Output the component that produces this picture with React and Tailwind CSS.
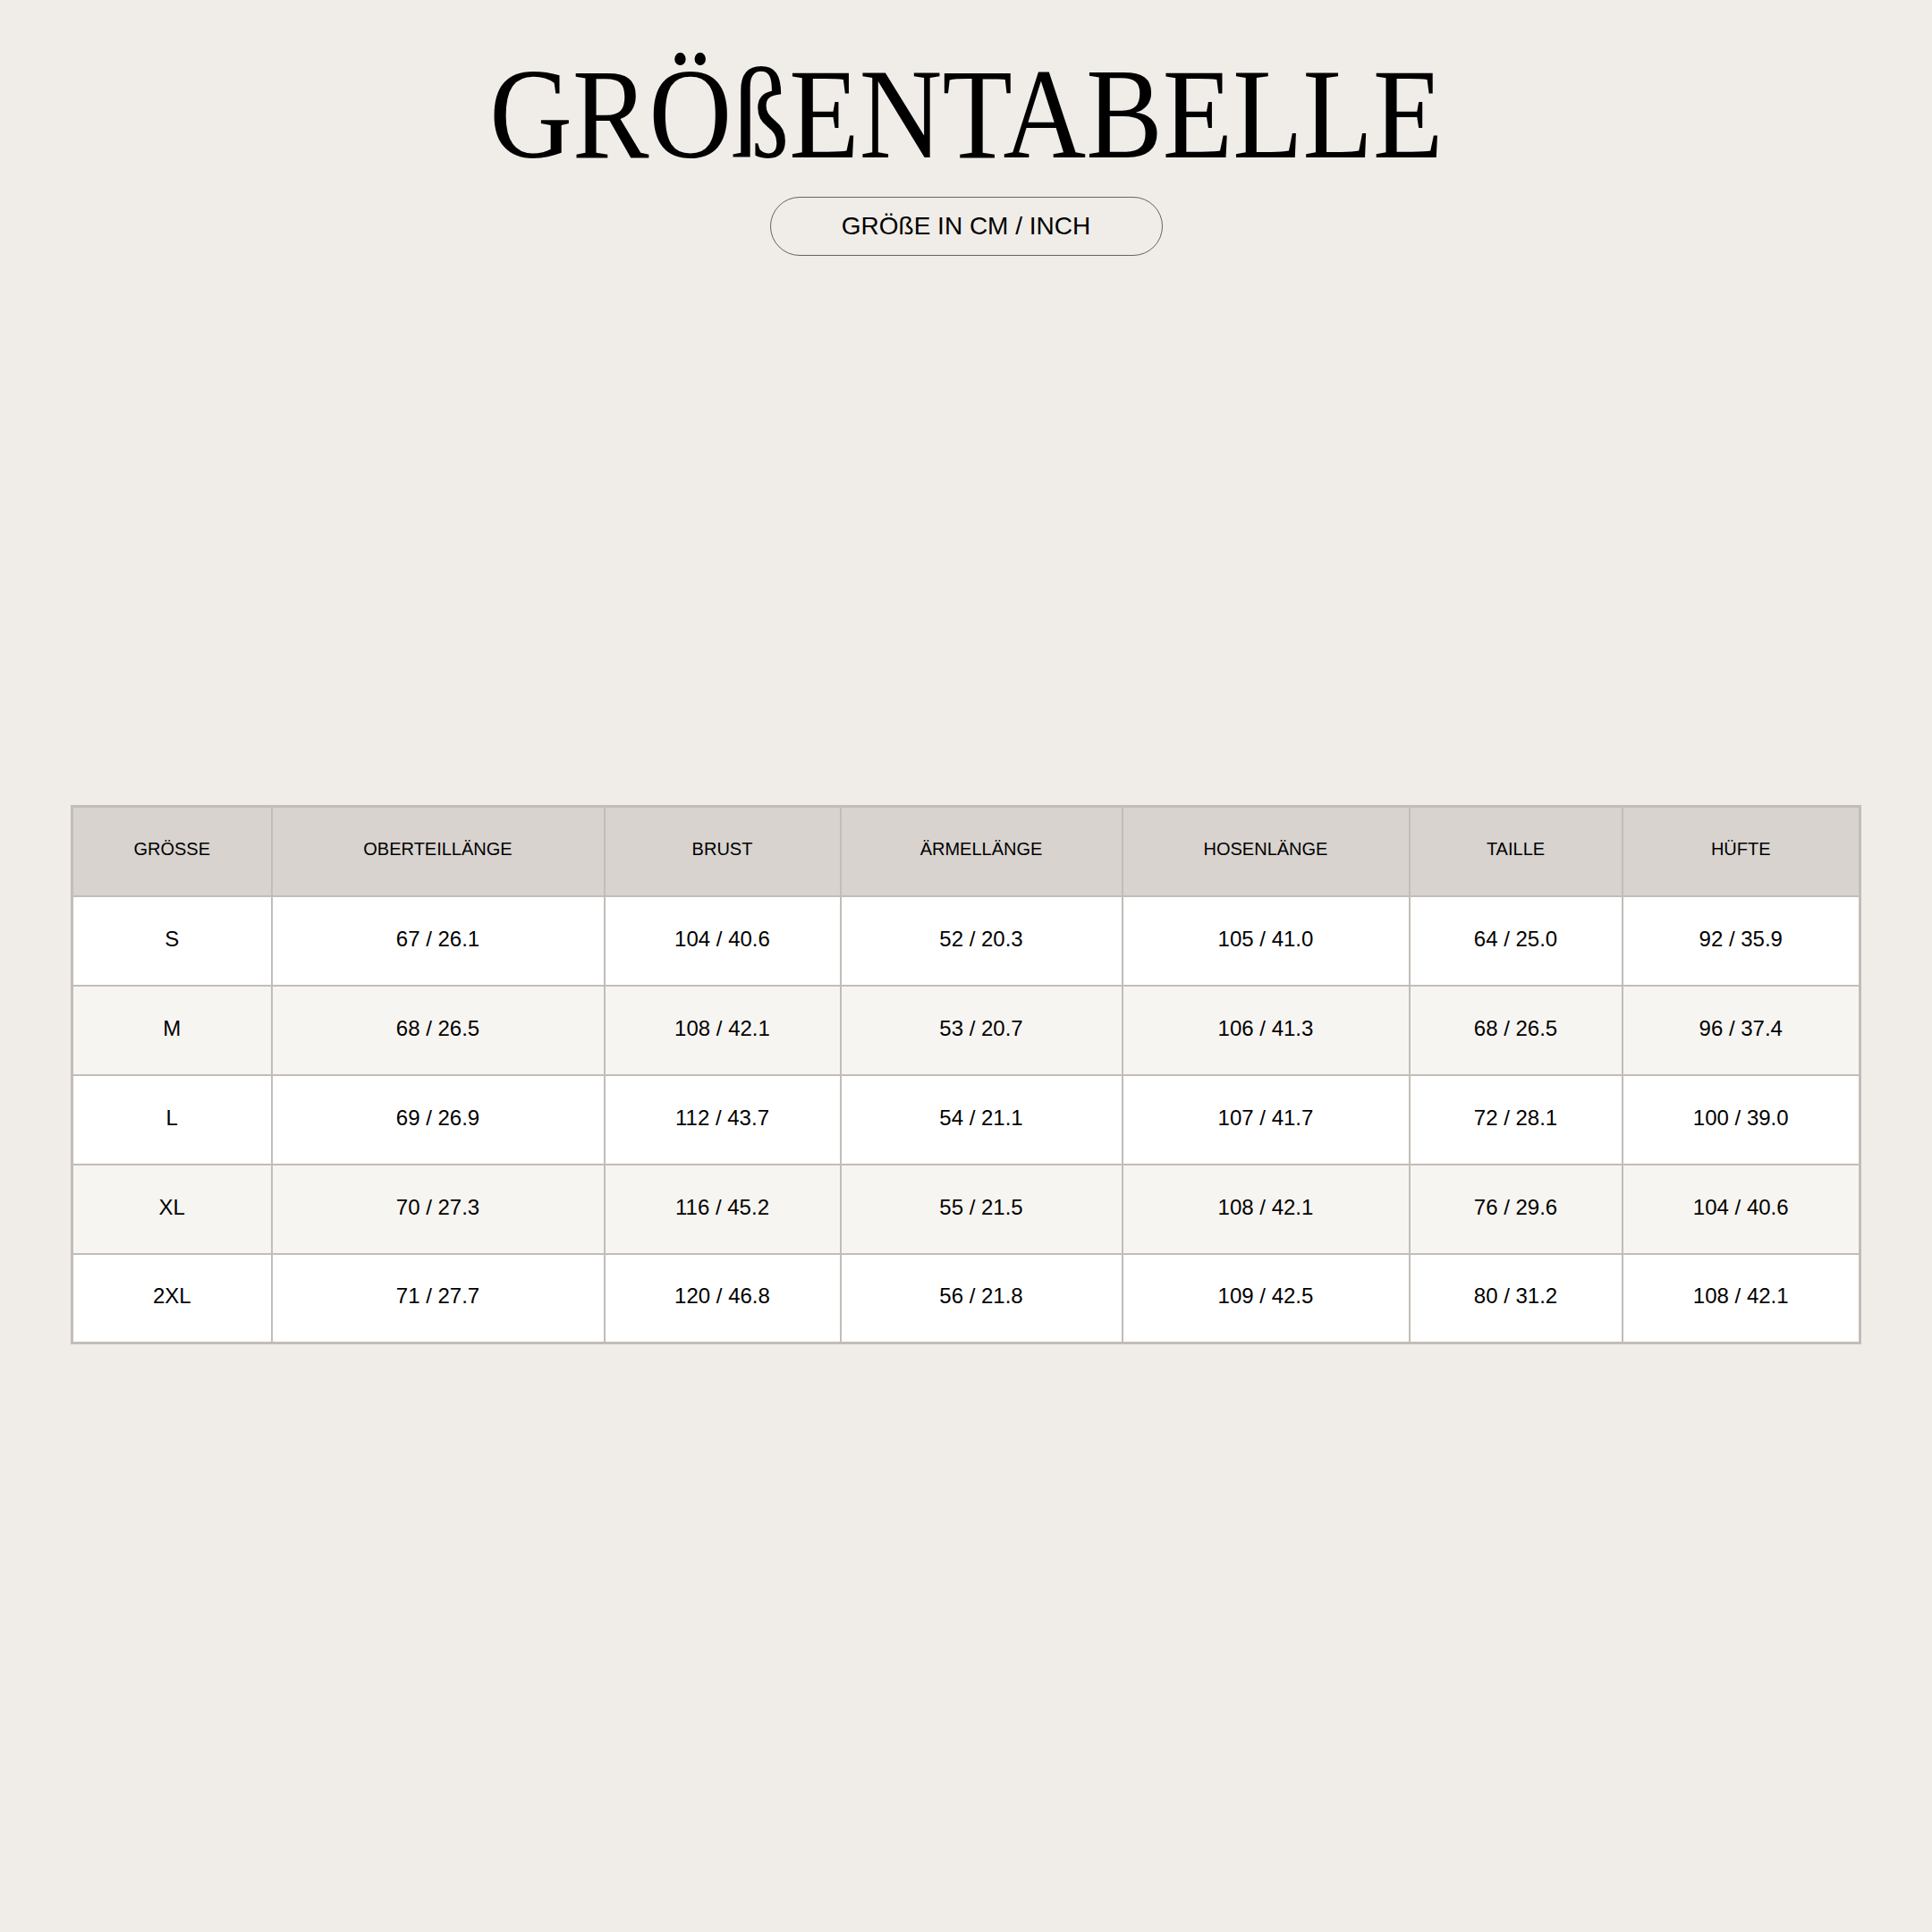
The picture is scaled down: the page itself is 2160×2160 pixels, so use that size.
import React from "react";

const columns = [
  { label: "GRÖSSE", width: "w-[223px]" },
  { label: "OBERTEILLÄNGE", width: "w-[372px]" },
  { label: "BRUST", width: "w-[264px]" },
  { label: "ÄRMELLÄNGE", width: "w-[315px]" },
  { label: "HOSENLÄNGE", width: "w-[321px]" },
  { label: "TAILLE", width: "w-[238px]" },
  { label: "HÜFTE", width: "w-[266px]" },
];

const rows = [
  ["S", "67 / 26.1", "104 / 40.6", "52 / 20.3", "105 / 41.0", "64 / 25.0", "92 / 35.9"],
  ["M", "68 / 26.5", "108 / 42.1", "53 / 20.7", "106 / 41.3", "68 / 26.5", "96 / 37.4"],
  ["L", "69 / 26.9", "112 / 43.7", "54 / 21.1", "107 / 41.7", "72 / 28.1", "100 / 39.0"],
  ["XL", "70 / 27.3", "116 / 45.2", "55 / 21.5", "108 / 42.1", "76 / 29.6", "104 / 40.6"],
  ["2XL", "71 / 27.7", "120 / 46.8", "56 / 21.8", "109 / 42.5", "80 / 31.2", "108 / 42.1"],
];

const App = () => {
  return (
    <div className="min-h-[2160px] w-full bg-[#f0ede8] text-black font-['Liberation_Sans',Arial,sans-serif]">
      <header className="flex flex-col items-center pt-[55px]">
        <h1 className="font-['Liberation_Serif','Times_New_Roman',serif] text-[145px] leading-none font-normal scale-x-[0.885]">
          GRÖßENTABELLE
        </h1>
        <div className="mt-[20px] flex h-[66px] w-[439px] items-center justify-center rounded-full border-[1.5px] border-[#666360]">
          <span className="text-[28px] leading-none">GRÖßE IN CM / INCH</span>
        </div>
      </header>

      <main className="mt-[614px] flex justify-center">
        <table className="w-[1999px] table-fixed border-collapse border-[3px] border-[#c2bdb8]">
          <thead>
            <tr className="h-[100px] bg-[#d8d3cf]">
              {columns.map((col) => (
                <th
                  key={col.label}
                  className={`${col.width} border-2 border-[#c2bdb8] pb-[5px] text-[20px] font-normal`}
                >
                  {col.label}
                </th>
              ))}
            </tr>
          </thead>
          <tbody>
            {rows.map((row, i) => (
              <tr
                key={row[0]}
                className={`h-[100px] ${i % 2 === 1 ? "bg-[#f7f5f1]" : "bg-white"}`}
              >
                {row.map((cell, j) => (
                  <td
                    key={j}
                    className="border-2 border-[#c2bdb8] pb-[4px] text-center text-[24px]"
                  >
                    {cell}
                  </td>
                ))}
              </tr>
            ))}
          </tbody>
        </table>
      </main>
    </div>
  );
};

export default App;
